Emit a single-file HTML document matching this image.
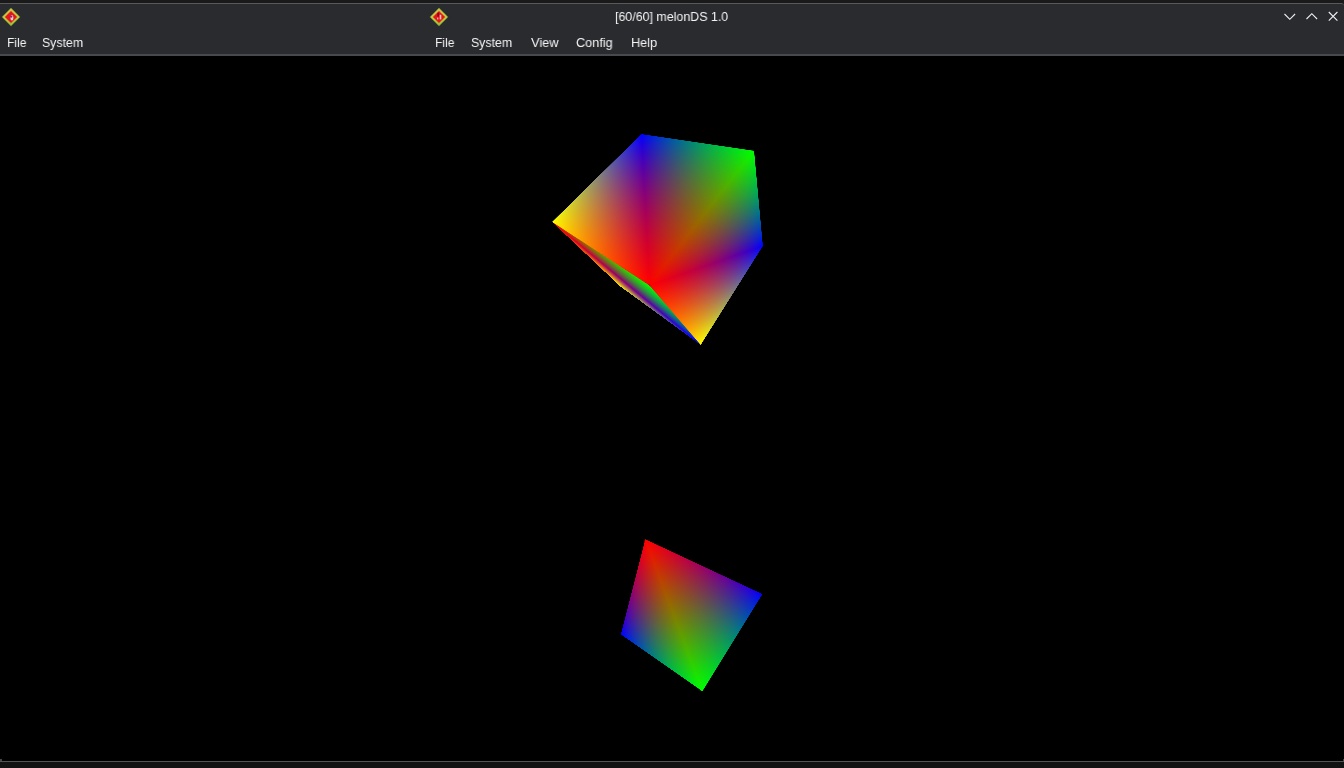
<!DOCTYPE html>
<html>
<head>
<meta charset="utf-8">
<title>[60/60] melonDS 1.0</title>
<style>
html,body{margin:0;padding:0;background:#000;}
body{width:1344px;height:768px;overflow:hidden;position:relative;font-family:"Liberation Sans",sans-serif;}
#topband{position:absolute;left:0;top:0;width:1344px;height:9px;background:#1a1a1a;}
#bar{position:absolute;left:0;top:3px;width:1344px;height:53px;background:#2a2b2f;box-sizing:border-box;border-top:1px solid #58595b;border-bottom:2px solid #48494c;border-top-right-radius:3px;}
#botline{position:absolute;left:0;top:761px;width:1344px;height:1px;background:#535456;}
.tick{position:absolute;top:759px;width:2px;height:2px;background:#5e5f61;border-radius:1px;}
#botband{position:absolute;left:0;top:762px;width:1344px;height:6px;background:#121212;}
.t{position:absolute;color:#f4f4f4;white-space:nowrap;font-size:13.3px;line-height:16px;transform-origin:0 0;will-change:transform;}
#screen{position:absolute;left:0;top:56px;width:1344px;height:705px;background:#000;overflow:hidden;}
svg{position:absolute;overflow:visible;}
.face{position:absolute;left:0;top:0;width:288px;height:288px;transform-origin:0 0;}
.cube{background-image:linear-gradient(to top right,#0f0 5.5556%,#000 50%,#0f0 94.4444%),linear-gradient(to right,#f00 5.5556%,#000 94.4444%),linear-gradient(to right,#000 5.5556%,#00f 94.4444%),linear-gradient(to bottom,#000 5.5556%,#00f 94.4444%);background-blend-mode:screen,screen,darken,normal;}
.quad{background-image:linear-gradient(to top right,#00f 5.5556%,#000 50%,#00f 94.4444%),linear-gradient(to right,#f00 5.5556%,#0f0 94.4444%),linear-gradient(to bottom,#f00 5.5556%,#0f0 94.4444%);background-blend-mode:screen,darken,normal;}
#gl{position:absolute;left:0;top:0;width:1344px;height:705px;filter:blur(0.7px);}
</style>
</head>
<body>
<div id="topband"></div>
<div id="bar"></div>
<div id="screen"><div id="gl">
<div class="face cube" style="transform:matrix3d(-0.4555621,-0.0463254,0,-0.001290519,1.288084,0.6325144,0,0.00164553,0,0,1,0,541.9157,157.4633,0,1);clip-path:polygon(16.00px 16.00px,21.00px 14.00px,267.00px 14.00px,272.00px 16.00px,274.00px 21.00px,274.00px 267.00px,272.00px 272.00px,267.05px 269.88px,18.12px 20.95px);"></div>
<div class="face cube" style="transform:matrix3d(-0.4555621,-0.0463254,0,-0.001290519,1.288084,0.6325144,0,0.00164553,0,0,1,0,541.9157,157.4633,0,1);clip-path:polygon(16.00px 16.00px,272.00px 272.00px,16.00px 272.00px);"></div>
<div class="face cube" style="transform:matrix3d(1.199791,-0.4545755,0,0.00102305,0.7013365,0.07016202,0,0.001992689,0,0,1,0,650.4215,246.7244,0,1);clip-path:polygon(16.00px 16.00px,21.00px 14.00px,267.00px 14.00px,272.00px 16.00px,272.00px 272.00px,267.05px 269.88px,18.12px 20.95px);"></div>
<div class="face cube" style="transform:matrix3d(1.199791,-0.4545755,0,0.00102305,0.7013365,0.07016202,0,0.001992689,0,0,1,0,650.4215,246.7244,0,1);clip-path:polygon(16.00px 16.00px,272.00px 272.00px,16.00px 272.00px);"></div>
<div class="face cube" style="transform:matrix3d(1.344231,-0.4442544,0,0.001207238,2.073843,1.014548,0,0.002656599,0,0,1,0,634.9638,234.5633,0,1);clip-path:polygon(16.00px 16.00px,272.00px 16.00px,272.00px 272.00px,267.05px 269.88px,18.12px 20.95px);"></div>
<div class="face cube" style="transform:matrix3d(1.344231,-0.4442544,0,0.001207238,2.073843,1.014548,0,0.002656599,0,0,1,0,634.9638,234.5633,0,1);clip-path:polygon(16.00px 16.00px,272.00px 272.00px,16.00px 272.00px);"></div>
<div class="face quad" style="transform:matrix3d(1.93061,1.253476,0,0.001930324,-1.561943,-0.5269291,0,-0.001724053,0,0,1,0,641.531,473.2703,0,1);clip-path:polygon(16.00px 16.00px,272.00px 16.00px,272.00px 272.00px,267.05px 269.88px,18.12px 20.95px);"></div>
<div class="face quad" style="transform:matrix3d(-1.027141,-1.035512,0,-0.002195784,1.395809,1.762059,0,0.002402055,0,0,1,0,641.531,473.2703,0,1);clip-path:polygon(16.00px 16.00px,272.00px 272.00px,16.00px 272.00px);"></div>
</div></div>
<div id="botline"></div>
<div id="botband"></div>
<div class="tick" style="left:-0.5px;"></div><div class="tick" style="left:1342.5px;"></div>

<!-- title + menus -->
<div class="t" id="title" style="left:614.8px;top:8.5px;transform:scaleX(0.9338);">[60/60] melonDS 1.0</div>
<div class="t" id="m1a" style="left:6.7px;top:34.5px;transform:scaleX(0.9131);">File</div>
<div class="t" id="m1b" style="left:41.8px;top:34.5px;transform:scaleX(0.9286);">System</div>
<div class="t" id="m2a" style="left:434.9px;top:34.5px;transform:scaleX(0.9131);">File</div>
<div class="t" id="m2b" style="left:471.3px;top:34.5px;transform:scaleX(0.9286);">System</div>
<div class="t" id="m2c" style="left:531.1px;top:34.5px;transform:scaleX(0.965);">View</div>
<div class="t" id="m2d" style="left:576px;top:34.5px;transform:scaleX(0.9546);">Config</div>
<div class="t" id="m2e" style="left:630.6px;top:34.5px;transform:scaleX(0.9546);">Help</div>

<!-- app icons -->
<svg width="24" height="24" style="left:-1.1px;top:4.8px;" viewBox="-12 -12 24 24">
 <defs><linearGradient id="ig" x1="0" y1="-9" x2="0" y2="9" gradientUnits="userSpaceOnUse"><stop offset="0" stop-color="#cdbf45"/><stop offset="0.55" stop-color="#c9c23c"/><stop offset="1" stop-color="#96b936"/></linearGradient></defs>
 <path d="M0 -9.6 L9.6 0 L0 9.6 L-9.6 0 Z" fill="#2c7f3a" opacity="0.55"/>
 <path d="M0 -8.9 L8.9 0 L0 8.9 L-8.9 0 Z" fill="url(#ig)"/>
 <path d="M0 -6.1 L6.1 0 L0 6.1 L-6.1 0 Z" fill="#e4151c"/>
 <ellipse cx="0.9" cy="0.7" rx="1.5" ry="2.7" fill="#f1d3cb"/>
 <circle cx="0.2" cy="-0.4" r="1.2" fill="#8c2270"/>
</svg>
<svg width="24" height="24" style="left:426.6px;top:5.0px;" viewBox="-12 -12 24 24">
 <path d="M0 -9.6 L9.6 0 L0 9.6 L-9.6 0 Z" fill="#2c7f3a" opacity="0.55"/>
 <path d="M0 -8.9 L8.9 0 L0 8.9 L-8.9 0 Z" fill="url(#ig)"/>
 <path d="M0 -6.1 L6.1 0 L0 6.1 L-6.1 0 Z" fill="#e4151c"/>
 <rect x="-1.6" y="-4.4" width="1.7" height="4.2" rx="0.8" fill="#85001e"/>
 <rect x="0.7" y="-2.2" width="1.6" height="4.6" fill="#f3c7b6"/>
 <rect x="-1.9" y="0.6" width="1.2" height="1.8" fill="#f3c7b6"/>
</svg>
<!-- window buttons -->
<svg width="64" height="20" style="left:1280px;top:7px;" viewBox="0 0 64 20">
 <g fill="none" stroke="#f0f0f0" stroke-width="1.1">
  <path d="M4.5 7 L9.8 12.3 L15.1 7"/>
  <path d="M26.5 12 L31.8 6.7 L37.1 12"/>
  <path d="M48.8 5 L57.4 13.6 M57.4 5 L48.8 13.6"/>
 </g>
</svg>
</body>
</html>
